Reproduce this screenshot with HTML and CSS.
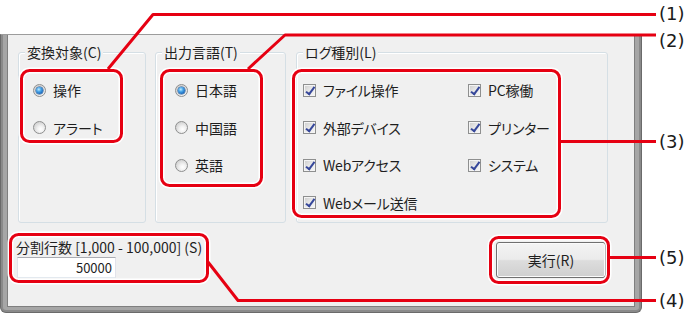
FILE: index.html
```html
<!DOCTYPE html>
<html lang="ja">
<head>
<meta charset="utf-8">
<title>ログ出力設定</title>
<link rel="stylesheet" href="styles.css">
</head>
<body>
<div class="page">
  <div class="dialog">
    <div class="panel">
      <div class="groups">
        <div class="group g1">
          <span class="legend">変換対象(C)</span>
          <ul class="opts">
            <li><span class="radio on"></span>操作</li>
            <li><span class="radio"></span>アラート</li>
          </ul>
        </div>
        <div class="group g2">
          <span class="legend">出力言語(T)</span>
          <ul class="opts">
            <li><span class="radio on"></span>日本語</li>
            <li><span class="radio"></span>中国語</li>
            <li><span class="radio"></span>英語</li>
          </ul>
        </div>
        <div class="group g3">
          <span class="legend">ログ種別(L)</span>
          <ul class="checks">
            <li><span class="check"></span>ファイル操作</li>
            <li><span class="check"></span>PC稼働</li>
            <li><span class="check"></span>外部デバイス</li>
            <li><span class="check"></span>プリンター</li>
            <li><span class="check"></span>Webアクセス</li>
            <li><span class="check"></span>システム</li>
            <li><span class="check"></span>Webメール送信</li>
          </ul>
        </div>
      </div>
      <div class="bottom">
        <div class="split">
          <div class="split-label">分割行数 [1,000 - 100,000] (S)</div>
          <div class="input">50000</div>
        </div>
        <button class="run" type="button">実行(R)</button>
      </div>
    </div>
  </div>

  <svg class="annot" width="692" height="316" viewBox="0 0 692 316">
    <g fill="none" stroke="#ffffff" stroke-width="6" stroke-linejoin="round">
      <rect x="21.5" y="70.5" width="100" height="71" rx="8"/>
      <rect x="161.5" y="70.5" width="100" height="115" rx="8"/>
      <rect x="293.5" y="70.5" width="266" height="146" rx="8"/>
      <rect x="10.5" y="234.5" width="197" height="47" rx="8"/>
      <rect x="490.5" y="237.5" width="118" height="45" rx="8"/>
    </g>
    <g fill="none" stroke="#e60012" stroke-width="3" stroke-linejoin="round">
      <rect x="21.5" y="70.5" width="100" height="71" rx="8"/>
      <rect x="161.5" y="70.5" width="100" height="115" rx="8"/>
      <rect x="293.5" y="70.5" width="266" height="146" rx="8"/>
      <rect x="10.5" y="234.5" width="197" height="47" rx="8"/>
      <rect x="490.5" y="237.5" width="118" height="45" rx="8"/>
      <polyline points="108,69 153,14.5 656,14.5"/>
      <polyline points="248,69 285,35 656,35"/>
      <polyline points="561,141.5 656,141.5"/>
      <polyline points="208,262 238,300.5 656,300.5"/>
      <polyline points="610,257.5 656,257.5"/>
    </g>
    <g class="labels">
      <text x="659" y="20">(1)</text>
      <text x="659" y="47">(2)</text>
      <text x="659" y="148">(3)</text>
      <text x="659" y="264">(5)</text>
      <text x="659" y="307">(4)</text>
    </g>
  </svg>
</div>
</body>
</html>
```

FILE: styles.css
```css
html, body {
  margin: 0;
  padding: 0;
  background: #ffffff;
}

body {
  font-family: "Noto Sans CJK JP", "Noto Sans", sans-serif;
  font-feature-settings: "palt";
  font-size: 14px;
  color: #1e1e1e;
}

.page {
  position: relative;
  width: 692px;
  height: 316px;
  padding-top: 34px;
  box-sizing: border-box;
  overflow: hidden;
}

/* window frame */
.dialog {
  width: 642px;
  height: 279px;
  box-sizing: border-box;
  border: 1px solid #6a6a6a;
  border-top: 1px solid #9c9c9c;
  border-radius: 0 0 6px 6px;
  background: #a6a6a6;
  box-shadow: inset 2px 0 0 #8a8a8a, inset -2px 0 0 #8a8a8a, inset 0 -2px 0 #8a8a8a;
  padding: 0 6px 6px 6px;
}

.panel {
  height: 272px;
  box-sizing: border-box;
  border: 1px solid #7f7f7f;
  border-top: none;
  background: #f0f0f0;
  padding: 17px 0 0 10px;
}

.groups {
  display: flex;
  gap: 9px;
}

.group {
  position: relative;
  height: 171px;
  box-sizing: border-box;
  border: 1px solid #d5dfe5;
  border-radius: 3px;
  box-shadow: inset 1px 1px 0 #ffffff;
}

.g1 { width: 128px; }
.g2 { width: 131px; }
.g3 { width: 312px; margin-left: 1px; }

.legend {
  position: absolute;
  top: -9px;
  left: 6px;
  padding: 0 2px;
  line-height: 16px;
  background: #f0f0f0;
  white-space: nowrap;
}

.opts,
.checks {
  list-style: none;
  margin: 0;
  padding: 28px 0 0 0;
}

.opts {
  display: flex;
  flex-direction: column;
  gap: 19.5px;
}

.g1 .opts { padding-left: 14px; }
.g2 .opts { padding-left: 19px; }

.checks {
  display: grid;
  grid-template-columns: 165px auto;
  row-gap: 19.5px;
  padding-left: 6px;
  letter-spacing: -0.2px;
}

.opts li,
.checks li {
  display: flex;
  align-items: center;
  gap: 7px;
  height: 18px;
  line-height: 18px;
  white-space: nowrap;
}

/* radio button */
.radio {
  position: relative;
  flex: none;
  width: 13px;
  height: 13px;
  box-sizing: border-box;
  border-radius: 50%;
  border: 1px solid #8e8f8f;
  background: radial-gradient(circle at 60% 65%, #ffffff 0, #f2f2f2 30%, #d6d6d6 70%, #bdbdbd 100%);
}

.radio.on::after {
  content: "";
  position: absolute;
  left: 2px;
  top: 2px;
  width: 7px;
  height: 7px;
  border-radius: 50%;
  background: radial-gradient(circle at 40% 35%, #c2ecff 0, #4aa6e8 35%, #1663b8 75%, #0d4a8e 100%);
  box-shadow: 0 0 0 0.5px #1b4f8a;
}

/* checkbox */
.check {
  position: relative;
  flex: none;
  width: 13px;
  height: 13px;
  box-sizing: border-box;
  border: 1px solid #8e8f8f;
  background: linear-gradient(135deg, #cbcbcb 0%, #e8e8e8 50%, #f6f6f6 100%);
  box-shadow: inset 0 0 0 1px #f4f4f4;
}

.check::after {
  content: "";
  position: absolute;
  left: 3.5px;
  top: 0px;
  width: 3px;
  height: 7.5px;
  border: solid #36479a;
  border-width: 0 2px 2px 0;
  transform: rotate(36deg);
}

/* bottom row */
.bottom {
  display: flex;
  justify-content: space-between;
  align-items: flex-start;
  margin: 16px 28px 0 -2px;
}

.split-label {
  line-height: 16px;
  white-space: nowrap;
}

.input {
  width: 99px;
  height: 21px;
  margin: 2px 0 0 1px;
  box-sizing: border-box;
  background: #ffffff;
  border: 1px solid;
  border-color: #abadb3 #e2e3ea #e3e9ef #e2e3ea;
  font-size: 13px;
  line-height: 19px;
  text-align: right;
  padding-right: 3px;
}

.run {
  width: 110px;
  height: 36px;
  margin-top: 3px;
  border: 1px solid #707070;
  border-radius: 3px;
  background: linear-gradient(#f4f4f4 0%, #ebebeb 48%, #dddddd 52%, #cfcfcf 100%);
  box-shadow: inset 0 0 0 1px #fbfbfb;
  font-family: "Noto Sans CJK JP", "Noto Sans", sans-serif;
  font-feature-settings: "palt";
  font-size: 14px;
  color: #1e1e1e;
  padding: 0;
}

/* annotation overlay */
.annot {
  position: absolute;
  left: 0;
  top: 0;
  pointer-events: none;
}

.labels text {
  font-family: "DejaVu Sans", Verdana, sans-serif;
  font-size: 18px;
  fill: #1a1a1a;
}
```
